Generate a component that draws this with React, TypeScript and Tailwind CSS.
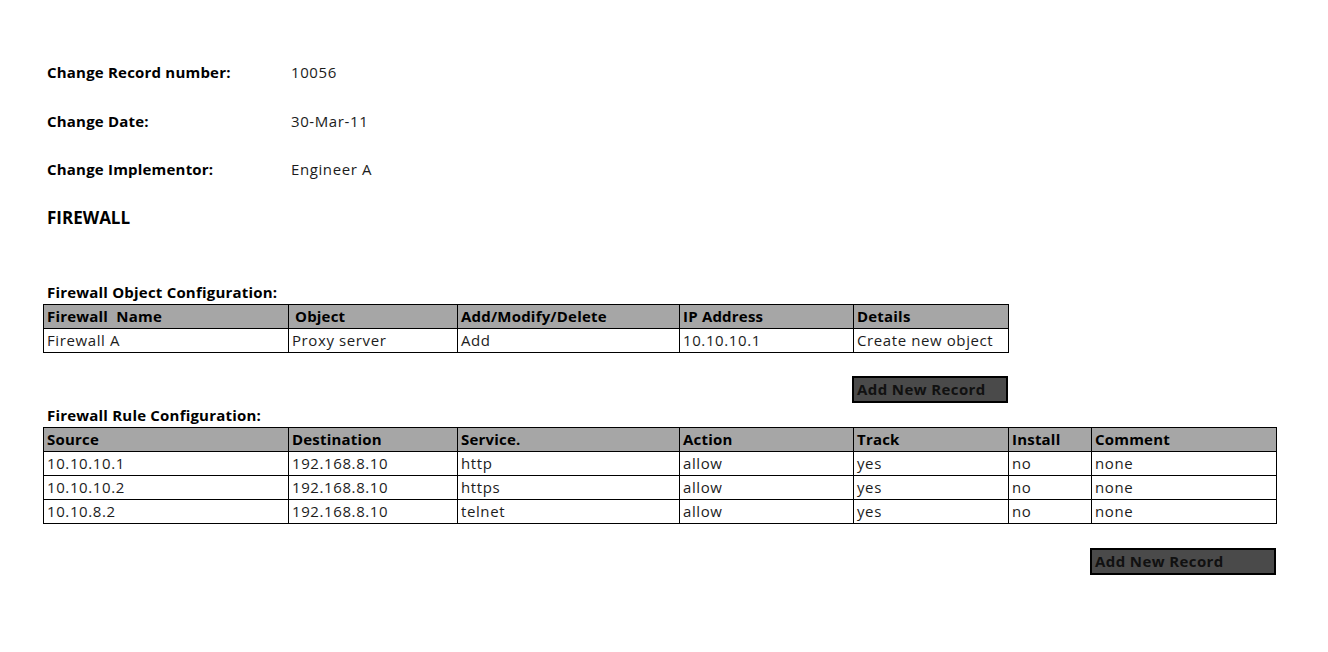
import React from "react";

const objCols = [245, 169, 222, 174, 155];
const ruleCols = [245, 169, 222, 174, 155, 83, 185];

const objHead = ["Firewall  Name", "Object", "Add/Modify/Delete", "IP Address", "Details"];
const objRows = [["Firewall A", "Proxy server", "Add", "10.10.10.1", "Create new object"]];

const ruleHead = ["Source", "Destination", "Service.", "Action", "Track", "Install", "Comment"];
const ruleRows = [
  ["10.10.10.1", "192.168.8.10", "http", "allow", "yes", "no", "none"],
  ["10.10.10.2", "192.168.8.10", "https", "allow", "yes", "no", "none"],
  ["10.10.8.2", "192.168.8.10", "telnet", "allow", "yes", "no", "none"],
];

function Sheet({ cols, head, rows }: { cols: number[]; head: string[]; rows: string[][] }) {
  return (
    <table className="border-collapse table-fixed" style={{ width: cols.reduce((a, b) => a + b, 0) }}>
      <colgroup>
        {cols.map((w, i) => (
          <col key={i} style={{ width: w }} />
        ))}
      </colgroup>
      <thead>
        <tr className="h-[24px] bg-[#a6a6a6]">
          {head.map((h, i) => (
            <th
              key={i}
              className={`border border-black text-left font-bold tracking-[0.2px] text-black px-[3px] py-0 leading-[22px] whitespace-pre ${
                h === "Object" ? "pl-[6px]" : ""
              }`}
            >
              {h}
            </th>
          ))}
        </tr>
      </thead>
      <tbody>
        {rows.map((r, ri) => (
          <tr key={ri} className="h-[24px]">
            {r.map((c, ci) => (
              <td key={ci} className="border border-black text-[#1c1c1c] tracking-[0.6px] px-[3px] py-0 leading-[22px]">
                {c}
              </td>
            ))}
          </tr>
        ))}
      </tbody>
    </table>
  );
}

function AddButton({ width }: { width: number }) {
  return (
    <button
      className="h-[27px] border-2 border-black bg-[#4a4a4a] text-left pl-[3px] font-bold tracking-[0.4px] text-[#111] leading-[22px]"
      style={{ width }}
    >
      Add New Record
    </button>
  );
}

export default function App() {
  const info = [
    ["Change Record number:", "10056"],
    ["Change Date:", "30-Mar-11"],
    ["Change Implementor:", "Engineer A"],
  ];

  return (
    <div className="w-[1328px] h-[652px] bg-white text-black text-[15px] font-['Open_Sans',sans-serif]">
      <div className="pt-[60px] pl-[47px]">
        {info.map(([k, v]) => (
          <div key={k} className="flex h-[48.5px] leading-[24px]">
            <span className="w-[244px] font-bold tracking-[0.2px]">{k}</span>
            <span className="text-[#1c1c1c] tracking-[0.6px]">{v}</span>
          </div>
        ))}
        <div className="h-[24px] leading-[24px] text-[17px] font-bold">FIREWALL</div>
      </div>

      <div className="pl-[43px] mt-[50px]">
        <div className="pl-[4px] h-[24px] leading-[24px] font-bold tracking-[0.2px]">Firewall Object Configuration:</div>
        <div className="w-[965px]">
          <Sheet cols={objCols} head={objHead} rows={objRows} />
          <div className="flex justify-end mt-[23px]">
            <AddButton width={156} />
          </div>
        </div>

        <div className="pl-[4px] h-[24px] leading-[24px] font-bold tracking-[0.2px]">Firewall Rule Configuration:</div>
        <div className="w-[1233px]">
          <Sheet cols={ruleCols} head={ruleHead} rows={ruleRows} />
          <div className="flex justify-end mt-[24px]">
            <AddButton width={186} />
          </div>
        </div>
      </div>
    </div>
  );
}
